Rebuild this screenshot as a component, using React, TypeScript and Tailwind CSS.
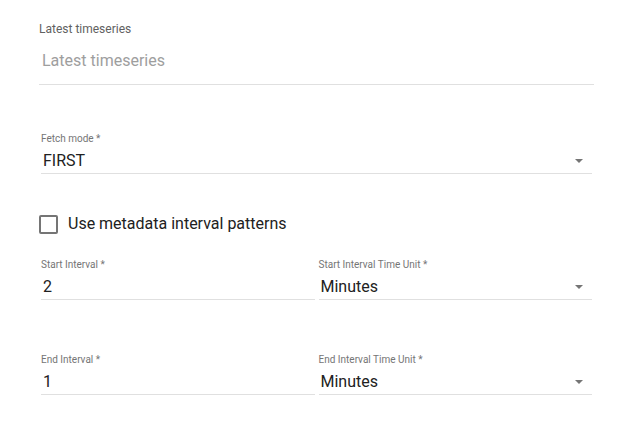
const font = { fontFamily: 'Roboto, "Liberation Sans", sans-serif' }

function Arrow() {
  return (
    <svg width="8" height="4" viewBox="0 0 8 4" className="shrink-0">
      <path d="M0 0 L8 0 L4 4 Z" fill="#757575" />
    </svg>
  )
}

function Field({ label, value, select }: { label: string; value: string; select?: boolean }) {
  return (
    <div className="flex-1 min-w-0">
      <div className="text-[10px] leading-[12px] text-[#757575]">{label}</div>
      <div className="mt-[4px] flex items-center h-[24px] pl-[2px] pr-[9px] border-b border-[#e0e0e0] box-content">
        <span className="flex-1 text-[16px] leading-[24px] text-[#212121]">{value}</span>
        {select && <Arrow />}
      </div>
    </div>
  )
}

export default function App() {
  return (
    <div className="w-[630px] h-[440px] bg-white pl-[39px] pr-[36px] pt-[21px]" style={font}>
      <div className="text-[12px] leading-[16px] text-[#616161]">Latest timeseries</div>
      <div className="mt-[12px] pl-[3px] h-[24px] pb-[11px] box-content border-b border-[#e0e0e0]">
        <span className="text-[16px] leading-[24px] text-[#9e9e9e]">Latest timeseries</span>
      </div>

      <div className="mt-[48px] px-[2px]">
        <Field label="Fetch mode *" value="FIRST" select />
      </div>

      <div className="mt-[38px] flex items-center h-[24px] gap-[10px]">
        <div className="w-[19px] h-[19px] border-2 border-[#757575] rounded-[2px]" />
        <span className="text-[16px] leading-[24px] text-[#212121]">Use metadata interval patterns</span>
      </div>

      <div className="mt-[23px] px-[2px] flex gap-[4px]">
        <Field label="Start Interval *" value="2" />
        <Field label="Start Interval Time Unit *" value="Minutes" select />
      </div>

      <div className="mt-[54px] px-[2px] flex gap-[4px]">
        <Field label="End Interval *" value="1" />
        <Field label="End Interval Time Unit *" value="Minutes" select />
      </div>
    </div>
  )
}
